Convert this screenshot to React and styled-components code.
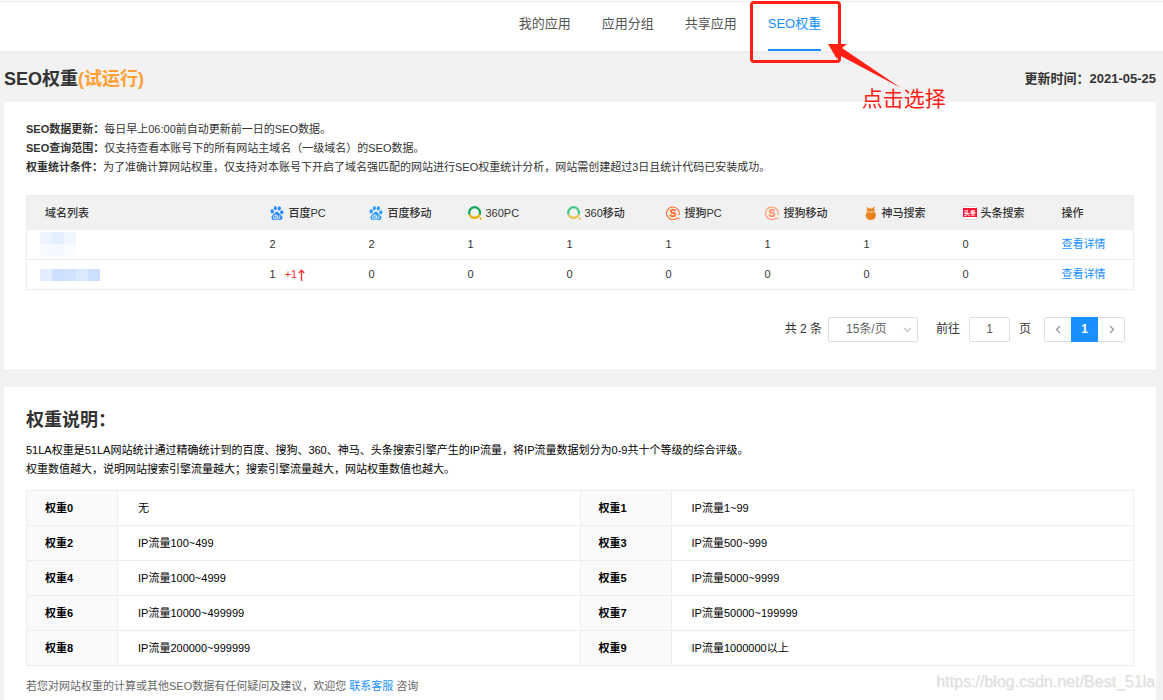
import React from "react";
import styled, { createGlobalStyle } from "styled-components";
import { SiBaidu } from "react-icons/si";

const GlobalStyle = createGlobalStyle`
  * { box-sizing: border-box; }
  body {
    margin: 0;
    background: #f2f2f2;
    color: #333;
    font-family: "Liberation Sans", "Noto Sans CJK SC", sans-serif;
    font-size: 11px;
    line-height: 19px;
  }
  p, h1, h2 { margin: 0; }
  a { color: #1890ff; text-decoration: none; }
`;

const Page = styled.div`
  position: relative;
  display: flex;
  flex-direction: column;
  min-height: 100vh;
  overflow: hidden;
`;

const Header = styled.header`
  background: #fff;
  border-top: 1px solid #fff;
  box-shadow: 0 1px 4px rgba(0, 0, 0, 0.04);
`;

const Nav = styled.nav`
  display: flex;
  justify-content: center;
  gap: 31px;
  height: 50px;
  padding-left: 177px;
  border-top: 1px solid #eee;
`;

const NavItem = styled.div`
  position: relative;
  display: flex;
`;

const NavLink = styled.a`
  display: block;
  padding-top: 12px;
  font-size: 13px;
  line-height: 20px;
  color: ${(p) => (p.$active ? "#1890ff" : "#555")};
  border-bottom: 2px solid ${(p) => (p.$active ? "#1890ff" : "transparent")};
`;

const Marker = styled.div`
  position: absolute;
  z-index: 2;
  top: -1px;
  left: -18px;
  right: -20px;
  height: 62px;
  border: 3px solid #ff2015;
  border-radius: 4px;
`;

const Arrow = styled.svg`
  position: absolute;
  z-index: 3;
  top: 41px;
  left: 59px;
`;

const MarkerText = styled.span`
  position: absolute;
  z-index: 3;
  top: 84px;
  left: 94px;
  font-size: 21px;
  line-height: 26px;
  white-space: nowrap;
  color: #ff2015;
`;

const Main = styled.main`
  display: flex;
  flex: 1;
  flex-direction: column;
  padding: 0 7px 0 4px;
`;

const TitleRow = styled.div`
  display: flex;
  justify-content: space-between;
  align-items: center;
  height: 51px;
  padding-top: 4px;
`;

const Title = styled.h1`
  font-size: 18px;
  line-height: 24px;
`;

const Trial = styled.span`
  color: #ff9f36;
`;

const Updated = styled.strong`
  font-size: 13px;
`;

const Card = styled.section`
  flex: ${(p) => (p.$grow ? "1 0 auto" : "none")};
  padding: 18px 22px ${(p) => (p.$grow ? "4px" : "27px")};
  margin-bottom: ${(p) => (p.$grow ? "0" : "18px")};
  background: #fff;
`;

const Label = styled.span`
  font-weight: 700;
`;

const DataTable = styled.table`
  width: 100%;
  margin-top: 18px;
  table-layout: fixed;
  border-collapse: collapse;
  border: 1px solid #ebeef0;
`;

const HeadCell = styled.th`
  height: 34px;
  padding: 1px 0 0 18px;
  text-align: left;
  font-weight: 500;
  background: #f1f1f1;
  white-space: nowrap;
`;

const Cell = styled.td`
  height: 30px;
  padding: 0 0 0 18px;
  border-bottom: 1px solid #ebeef0;
`;

const Engine = styled.span`
  display: flex;
  align-items: center;
  gap: ${(p) => p.$gap}px;
  svg { flex: none; }
`;

const Rise = styled.span`
  display: inline-flex;
  align-items: center;
  gap: 1px;
  margin-left: 9px;
  color: #f5322d;
`;

const Mosaic = styled.div`
  display: grid;
  grid-template-columns: repeat(${(p) => p.$cols}, 12px);
  grid-auto-rows: 12px;
  margin-left: -5px;
`;

const Pixel = styled.span`
  background: ${(p) => p.$color};
`;

const Pager = styled.div`
  display: flex;
  justify-content: flex-end;
  align-items: center;
  margin-top: 27px;
  padding-right: 9px;
  font-size: 12px;
`;

const SelectWrap = styled.span`
  position: relative;
  display: flex;
  margin: 0 18px 0 6px;
  svg {
    position: absolute;
    right: 6px;
    top: 8px;
    pointer-events: none;
  }
`;

const PageSize = styled.select`
  appearance: none;
  width: 90px;
  height: 25px;
  padding: 0 0 0 17px;
  border: 1px solid #dcdfe6;
  border-radius: 2px;
  background: #fff;
  color: #606266;
  font: inherit;
`;

const JumpLabel = styled.label`
  display: flex;
  align-items: center;
  gap: 9px;
  margin-right: 13px;
`;

const JumpInput = styled.input`
  width: 41px;
  height: 25px;
  padding: 0 0 1px;
  border: 1px solid #dcdfe6;
  border-radius: 2px;
  text-align: center;
  color: #606266;
  font: inherit;
`;

const PageButtons = styled.div`
  display: flex;
  border: 1px solid #dcdfe6;
  border-radius: 2px;
`;

const PageButton = styled.button`
  display: flex;
  align-items: center;
  justify-content: center;
  width: ${(p) => (p.$active ? 27 : 26)}px;
  height: ${(p) => (p.$active ? 25 : 23)}px;
  margin: ${(p) => (p.$active ? "-1px 0" : "0")};
  padding: 0;
  border: 0;
  background: ${(p) => (p.$active ? "#1890ff" : "#fff")};
  color: ${(p) => (p.$active ? "#fff" : "#999")};
  font: inherit;
  font-weight: 700;
`;

const Heading = styled.h2`
  padding: 2px 0 8px;
  font-size: 18px;
  line-height: 26px;
`;

const Text = styled.p`
  color: ${(p) => p.$color};
`;

const LevelTable = styled.table`
  width: 100%;
  margin: 11px 0;
  table-layout: fixed;
  border-collapse: collapse;
  color: #000;
`;

const LevelHead = styled.th`
  height: 35px;
  padding: 0 0 0 18px;
  border: 1px solid #eee;
  background: #fafafa;
  text-align: left;
`;

const LevelCell = styled.td`
  padding: 0 0 0 20px;
  border: 1px solid #eee;
`;

const Watermark = styled.span`
  position: absolute;
  right: 8px;
  bottom: 7px;
  font-size: 16px;
  line-height: 22px;
  color: #dedede;
  text-shadow: 1px 1px 0 #f4f4f4;
`;

function SoIcon({ green, yellow }) {
  return (
    <svg width="14" height="14" viewBox="0 0 14 14" fill="none" aria-hidden="true">
      <path d="M1.6 8.6A5.4 5.4 0 1 1 11.6 8.6" stroke={green} strokeWidth="2.2" />
      <path d="M1.6 8.6A5.4 5.4 0 0 0 11.6 8.6" stroke={yellow} strokeWidth="2.2" />
      <circle cx="12.8" cy="12.6" r="1.2" fill={yellow} />
    </svg>
  );
}

function SogouIcon({ color }) {
  return (
    <svg width="14" height="14" viewBox="0 0 14 14" aria-hidden="true">
      <path d="M11.4 11.7A6.3 6.3 0 1 1 12.9 9.2" fill="none" stroke={color} strokeWidth="1.1" />
      <text x="7" y="10.6" textAnchor="middle" fontSize="10" fontWeight="700" fill={color} stroke={color} strokeWidth="0.4">S</text>
      <circle cx="12.6" cy="12.6" r="0.9" fill={color} />
    </svg>
  );
}

function ShenmaIcon() {
  return (
    <svg width="14" height="14" viewBox="0 0 14 14" fill="#e8821c" aria-hidden="true">
      <path d="M2.4 0.6L5.4 3.1L6.2 1.6L7.6 3L10.8 0L10.2 3.4L11.6 4.2L9.2 5.4H4.4L2.2 4.4L3.3 3.4Z" />
      <path d="M3.6 5.4H10C11.8 6.8 12.2 8.8 11.8 10.3C11.3 12.6 9.7 14 6.9 14C4.1 14 2.3 12.6 1.8 10.3C1.5 8.8 1.9 6.8 3.6 5.4Z" />
      <path d="M3.9 5.5L6.8 6.9L9.7 5.5" fill="none" stroke="#f8d9b4" strokeWidth="0.6" />
    </svg>
  );
}

function ToutiaoIcon() {
  return (
    <svg width="14" height="14" viewBox="0 0 14 14" aria-hidden="true">
      <rect x="0.5" y="0.5" width="13" height="13" rx="1.5" fill="#fff" stroke="#ddd" />
      <rect y="2" width="14" height="9" fill="#fa1232" />
      <text x="7" y="9" textAnchor="middle" fontSize="6" fontWeight="700" fill="#fff">头条</text>
    </svg>
  );
}

const engines = [
  { name: "百度PC", gap: 5, icon: <SiBaidu size={14} color="#2688ff" /> },
  { name: "百度移动", gap: 5, icon: <SiBaidu size={14} color="#2c9dfa" /> },
  { name: "360PC", gap: 4, icon: <SoIcon green="#12a85a" yellow="#eeb011" /> },
  { name: "360移动", gap: 4, icon: <SoIcon green="#45c98b" yellow="#e9c454" /> },
  { name: "搜狗PC", gap: 5, icon: <SogouIcon color="#fb6e2a" /> },
  { name: "搜狗移动", gap: 5, icon: <SogouIcon color="#fc9468" /> },
  { name: "神马搜索", gap: 4, icon: <ShenmaIcon /> },
  { name: "头条搜索", gap: 4, icon: <ToutiaoIcon /> },
];

const sites = [
  {
    cols: 3,
    pixels: ["#edf4ff", "#e3eeff", "#f1f7ff", "#f6faff", "#f4f8ff", "#f9fcff"],
    weights: [2, 2, 1, 1, 1, 1, 1, 0],
  },
  {
    cols: 5,
    pixels: ["#e2edff", "#cde0ff", "#d0e2ff", "#dbe9ff", "#cde0ff"],
    weights: [1, 0, 0, 0, 0, 0, 0, 0],
    rise: "+1",
  },
];

const levels = [
  ["权重0", "无", "权重1", "IP流量1~99"],
  ["权重2", "IP流量100~499", "权重3", "IP流量500~999"],
  ["权重4", "IP流量1000~4999", "权重5", "IP流量5000~9999"],
  ["权重6", "IP流量10000~499999", "权重7", "IP流量50000~199999"],
  ["权重8", "IP流量200000~999999", "权重9", "IP流量1000000以上"],
];

const notes = [
  ["SEO数据更新：", "每日早上06:00前自动更新前一日的SEO数据。"],
  ["SEO查询范围：", "仅支持查看本账号下的所有网站主域名（一级域名）的SEO数据。"],
  ["权重统计条件：", "为了准确计算网站权重，仅支持对本账号下开启了域名强匹配的网站进行SEO权重统计分析，网站需创建超过3日且统计代码已安装成功。"],
];

function Chevron({ d, color = "#999", size = 9 }) {
  return (
    <svg width={size} height={size} viewBox="0 0 9 9" fill="none" stroke={color} strokeWidth="1.3" aria-hidden="true">
      <path d={d} />
    </svg>
  );
}

export default function App() {
  return (
    <Page>
      <GlobalStyle />
      <Header>
        <Nav>
          {["我的应用", "应用分组", "共享应用"].map((name) => (
            <NavItem key={name}><NavLink href="#">{name}</NavLink></NavItem>
          ))}
          <NavItem>
            <NavLink href="#" $active>SEO权重</NavLink>
            <Marker />
            <Arrow width="76" height="46" viewBox="0 0 76 46" fill="#ff2015" aria-hidden="true">
              <path d="M1 1L20 1L15 5L74 45L12 12L10 16Z" />
            </Arrow>
            <MarkerText>点击选择</MarkerText>
          </NavItem>
        </Nav>
      </Header>
      <Main>
        <TitleRow>
          <Title>SEO权重<Trial>(试运行)</Trial></Title>
          <Updated>更新时间：2021-05-25</Updated>
        </TitleRow>
        <Card>
          {notes.map(([label, text]) => (
            <Text key={label} $color="#333"><Label>{label}</Label>{text}</Text>
          ))}
          <DataTable>
            <colgroup>
              <col />
              {engines.map((e) => <col key={e.name} width="99" />)}
              <col width="90" />
            </colgroup>
            <thead>
              <tr>
                <HeadCell scope="col">域名列表</HeadCell>
                {engines.map((e) => (
                  <HeadCell key={e.name} scope="col">
                    <Engine $gap={e.gap}>{e.icon}{e.name}</Engine>
                  </HeadCell>
                ))}
                <HeadCell scope="col">操作</HeadCell>
              </tr>
            </thead>
            <tbody>
              {sites.map((site, row) => (
                <tr key={row}>
                  <Cell>
                    <Mosaic $cols={site.cols}>
                      {site.pixels.map((color, i) => <Pixel key={i} $color={color} />)}
                    </Mosaic>
                  </Cell>
                  {site.weights.map((weight, i) => (
                    <Cell key={i}>
                      {weight}
                      {i === 0 && site.rise && (
                        <Rise>
                          {site.rise}
                          <svg width="7" height="12" viewBox="0 0 7 12" fill="none" stroke="currentColor" strokeWidth="1.3" aria-hidden="true">
                            <path d="M3.5 12V1.2M0.8 4L3.5 1.2L6.2 4" />
                          </svg>
                        </Rise>
                      )}
                    </Cell>
                  ))}
                  <Cell><a href="#">查看详情</a></Cell>
                </tr>
              ))}
            </tbody>
          </DataTable>
          <Pager>
            <span>共 2 条</span>
            <SelectWrap>
              <PageSize aria-label="每页条数"><option>15条/页</option></PageSize>
              <Chevron d="M1 3L4.5 6.5L8 3" color="#c0c4cc" />
            </SelectWrap>
            <JumpLabel>前往<JumpInput type="text" defaultValue="1" />页</JumpLabel>
            <PageButtons>
              <PageButton type="button" aria-label="上一页"><Chevron d="M6 1L2.5 4.5L6 8" /></PageButton>
              <PageButton type="button" $active>1</PageButton>
              <PageButton type="button" aria-label="下一页"><Chevron d="M3 1L6.5 4.5L3 8" /></PageButton>
            </PageButtons>
          </Pager>
        </Card>
        <Card $grow>
          <Heading>权重说明：</Heading>
          <Text $color="#000">51LA权重是51LA网站统计通过精确统计到的百度、搜狗、360、神马、头条搜索引擎产生的IP流量，将IP流量数据划分为0-9共十个等级的综合评级。</Text>
          <Text $color="#000">权重数值越大，说明网站搜索引擎流量越大；搜索引擎流量越大，网站权重数值也越大。</Text>
          <LevelTable>
            <colgroup><col width="91" /><col /><col width="91" /><col /></colgroup>
            <tbody>
              {levels.map(([a, b, c, d]) => (
                <tr key={a}>
                  <LevelHead scope="row">{a}</LevelHead>
                  <LevelCell>{b}</LevelCell>
                  <LevelHead scope="row">{c}</LevelHead>
                  <LevelCell>{d}</LevelCell>
                </tr>
              ))}
            </tbody>
          </LevelTable>
          <Text $color="#666">若您对网站权重的计算或其他SEO数据有任何疑问及建议，欢迎您 <a href="#">联系客服</a> 咨询</Text>
        </Card>
      </Main>
      <Watermark>https://blog.csdn.net/Best_51la</Watermark>
    </Page>
  );
}
